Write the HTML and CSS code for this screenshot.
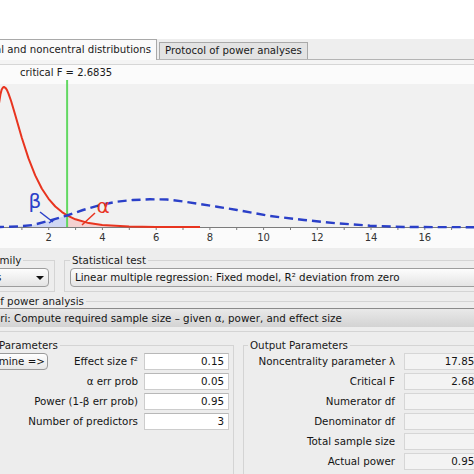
FILE: index.html
```html
<!DOCTYPE html>
<html lang="en">
<head>
<meta charset="utf-8">
<title>G*Power</title>
<link rel="stylesheet" href="styles.css">
</head>
<body>
<div class="window">
  <div class="titlespace"></div>
  <div class="tabs">
    <div class="tab active">Central and noncentral distributions</div>
    <div class="tab">Protocol of power analyses</div>
  </div>
  <div class="tabband"></div>
  <div class="chart">
    <div class="crit">critical F = 2.6835</div>
    <svg class="plot" width="474" height="168" viewBox="0 0 474 168">
      <rect x="0" y="4" width="474" height="143" fill="#f1f1f1"/>
      <polygon fill="#b9c6f5" fill-opacity="0.6" points="-5,147 10,146.8 20,146.3 33,145 50,140.5 67,135.5 67,147"/>
      <polygon fill="#f7bcbc" fill-opacity="0.6" points="67.1,135.3 75.4,139.3 88.8,143.1 102.2,145 129,146.5 155.8,146.9 155.8,147 67.1,147"/>
      <line x1="0" y1="147.5" x2="474" y2="147.5" stroke="#7c7c7c" stroke-width="1"/>
      <g stroke="#7c7c7c" stroke-width="1">
        <line x1="21.9" y1="147" x2="21.9" y2="150"/>
        <line x1="48.7" y1="147" x2="48.7" y2="150"/>
        <line x1="75.6" y1="147" x2="75.6" y2="150"/>
        <line x1="102.4" y1="147" x2="102.4" y2="150"/>
        <line x1="129.3" y1="147" x2="129.3" y2="150"/>
        <line x1="156.2" y1="147" x2="156.2" y2="150"/>
        <line x1="183" y1="147" x2="183" y2="150"/>
        <line x1="209.9" y1="147" x2="209.9" y2="150"/>
        <line x1="236.7" y1="147" x2="236.7" y2="150"/>
        <line x1="263.6" y1="147" x2="263.6" y2="150"/>
        <line x1="290.5" y1="147" x2="290.5" y2="150"/>
        <line x1="317.3" y1="147" x2="317.3" y2="150"/>
        <line x1="344.2" y1="147" x2="344.2" y2="150"/>
        <line x1="371" y1="147" x2="371" y2="150"/>
        <line x1="397.9" y1="147" x2="397.9" y2="150"/>
        <line x1="424.8" y1="147" x2="424.8" y2="150"/>
        <line x1="451.6" y1="147" x2="451.6" y2="150"/>
      </g>
      <g class="ticklabels" text-anchor="middle">
        <text x="48.7" y="161">2</text>
        <text x="102.4" y="161">4</text>
        <text x="156.2" y="161">6</text>
        <text x="209.9" y="161">8</text>
        <text x="263.6" y="161">10</text>
        <text x="317.3" y="161">12</text>
        <text x="371" y="161">14</text>
        <text x="424.8" y="161">16</text>
      </g>
      <line x1="67.1" y1="0" x2="67.1" y2="147" stroke="#62d862" stroke-width="2"/>
      <polyline fill="none" stroke="#e8341f" stroke-width="2" stroke-linejoin="round"
        points="-2.3,38 -1,23.3 0.4,14.5 1.7,9.5 3.1,7.3 3.9,6.9 5.7,8.1 7.1,10.3 8.4,13.3 11.1,21 15.1,34.5 21.8,57.7 28.5,78.4 35.2,95.4 41.9,108.7 48.6,118.8 55.3,126.5 62,132.1 67.1,135.3 75.4,139.3 88.8,143.1 102.2,145 129,146.5 155.8,146.9 200,147"/>
      <polyline fill="none" stroke="#2b40c8" stroke-width="2.4" stroke-dasharray="9 5" stroke-linejoin="round"
        points="-5,147 10,146.8 20,146.3 33,145 50,140.5 67,135.5 83,130 100,125 117,121.7 133,120 150,119.3 167,119.5 183,121.5 200,124 217,126.7 237,130 270,136 304,140 337,143.3 370,145.7 404,147 474,147.2"/>
      <text class="greek beta" x="35" y="128" text-anchor="middle">β</text>
      <line x1="40" y1="132" x2="53" y2="142" stroke="#2b40c8" stroke-width="1.5"/>
      <line x1="49" y1="143" x2="55" y2="139" stroke="#2b40c8" stroke-width="1.5"/>
      <text class="greek alpha" x="103" y="133" text-anchor="middle">α</text>
      <line x1="95" y1="133" x2="82" y2="145" stroke="#e8341f" stroke-width="1.5"/>
    </svg>
  </div>

  <div class="controls">
    <div class="row-top">
      <fieldset class="box fam">
        <legend>Test family</legend>
        <div class="select fam-select">F tests<span class="arrow"></span></div>
      </fieldset>
      <fieldset class="box stat">
        <legend>Statistical test</legend>
        <div class="select stat-select">Linear multiple regression: Fixed model, R² deviation from zero</div>
      </fieldset>
    </div>

    <fieldset class="box type">
      <legend>Type of power analysis</legend>
      <div class="bar">A priori: Compute required sample size – given α, power, and effect size</div>
    </fieldset>

    <div class="row-params">
      <fieldset class="box input">
        <legend>Input Parameters</legend>
        <div class="grid-in">
          <div class="btn">Determine =&gt;</div>
          <div class="lbl r1">Effect size f²</div>
          <div class="field r1">0.15</div>
          <div class="lbl wide r2">α err prob</div>
          <div class="field r2">0.05</div>
          <div class="lbl wide r3">Power (1-β err prob)</div>
          <div class="field r3">0.95</div>
          <div class="lbl wide r4">Number of predictors</div>
          <div class="field r4">3</div>
        </div>
      </fieldset>
      <fieldset class="box output">
        <legend>Output Parameters</legend>
        <div class="grid-out">
          <div class="lbl">Noncentrality parameter λ</div>
          <div class="ofield">17.8500000</div>
          <div class="lbl">Critical F</div>
          <div class="ofield">2.6835182</div>
          <div class="lbl">Numerator df</div>
          <div class="ofield">3</div>
          <div class="lbl">Denominator df</div>
          <div class="ofield">115</div>
          <div class="lbl">Total sample size</div>
          <div class="ofield">119</div>
          <div class="lbl">Actual power</div>
          <div class="ofield">0.9501287</div>
        </div>
      </fieldset>
    </div>
  </div>
</div>
</body>
</html>
```

FILE: styles.css
```css
html, body {
  margin: 0;
  padding: 0;
  overflow: hidden;
  background: #ffffff;
}
body {
  width: 474px;
  height: 474px;
  font-family: "DejaVu Sans", "Liberation Sans", sans-serif;
  font-size: 10px;
  color: #141414;
}
.window {
  width: 474px;
}
.titlespace {
  height: 39px;
  background: #ffffff;
}
.tabs {
  display: flex;
  align-items: flex-end;
  gap: 2px;
  height: 20px;
  background: #eeeeee;
  border-bottom: 1px solid #b4b4b4;
  font-size: 10.2px;
}
.tab {
  flex-shrink: 0;
  box-sizing: border-box;
  padding: 0 5px;
  height: 17px;
  line-height: 16px;
  border: 1px solid #a9a9a9;
  border-bottom: none;
  background: #e3e3e3;
  white-space: nowrap;
  color: #1a1a1a;
}
.tab.active {
  margin-left: -39px;
  height: 21px;
  line-height: 19px;
  background: #fafafa;
  margin-bottom: -1px;
}
.tabband {
  height: 4px;
  background: #f4f4f4;
  border-bottom: 1px solid #d6d6d6;
}
.chart {
  background: #fbfbfb;
}
.crit {
  height: 15px;
  line-height: 15px;
  padding-left: 20px;
  color: #1a1a1a;
}
.plot {
  display: block;
}
.ticklabels text {
  font-family: "DejaVu Sans", sans-serif;
  font-size: 10px;
  fill: #333;
}
.greek {
  font-family: "DejaVu Sans", sans-serif;
  font-size: 20px;
}
.beta { fill: #2b40c8; }
.alpha { fill: #e8341f; }

.controls {
  background: #ededed;
  padding-top: 6px;
  height: 226px;
  font-size: 10.3px;
}
.box {
  margin: 0;
  min-width: 0;
  border: 1px solid #d4d4d4;
  box-sizing: border-box;
}
.box legend {
  padding: 0 2px;
  line-height: 12px;
  height: 12px;
  white-space: nowrap;
  color: #1a1a1a;
}
.row-top {
  display: flex;
  gap: 9px;
}
.fam {
  flex-shrink: 0;
  width: 92px;
  margin-left: -37px;
  padding: 2px 5px 4px 1px;
}
.fam legend {
  margin-left: -1px;
}
.stat {
  flex-shrink: 0;
  width: 540px;
  padding: 2px 5px 4px 5px;
}
.select {
  box-sizing: border-box;
  height: 19px;
  line-height: 17px;
  border: 1px solid #9d9d9d;
  border-radius: 4px;
  background: linear-gradient(#fdfdfd, #e4e4e4);
  white-space: nowrap;
  position: relative;
}
.fam-select {
  padding-left: 1px;
}
.stat-select {
  padding-left: 4px;
}
.arrow {
  position: absolute;
  right: 4px;
  top: 7px;
  width: 0;
  height: 0;
  border-left: 4px solid transparent;
  border-right: 4px solid transparent;
  border-top: 4px solid #111;
}
.type {
  margin-top: 3px;
  margin-left: -36px;
  width: 560px;
  padding: 1px 0 4px 0;
}
.bar {
  height: 19px;
  box-sizing: border-box;
  line-height: 18px;
  padding-left: 5px;
  border-top: 1px solid #8a8a8a;
  background: linear-gradient(#e9e9e9, #d3d3d3);
  white-space: nowrap;
}
.row-params {
  display: flex;
  gap: 9px;
  margin-top: 7px;
}
.input {
  flex-shrink: 0;
  margin-left: -40px;
  width: 274px;
  padding: 2px 4px 8px 6px;
}
.output {
  flex-shrink: 0;
  width: 274px;
  padding: 2px 4px 8px 4px;
}
.grid-in {
  display: grid;
  grid-template-columns: 81px 84px 85px;
  column-gap: 6px;
  row-gap: 3px;
  grid-auto-rows: 17px;
}
.grid-in .btn { grid-column: 1; grid-row: 1; }
.grid-in .lbl { grid-column: 2; }
.grid-in .lbl.wide { grid-column: 1 / 3; }
.grid-in .field { grid-column: 3; }
.grid-in .r1 { grid-row: 1; }
.grid-in .r2 { grid-row: 2; }
.grid-in .r3 { grid-row: 3; }
.grid-in .r4 { grid-row: 4; }
.btn {
  box-sizing: border-box;
  height: 17px;
  line-height: 15px;
  border: 1px solid #9a9a9a;
  border-radius: 4px;
  background: linear-gradient(#ffffff, #e6e6e6);
  text-align: center;
  white-space: nowrap;
}
.lbl {
  line-height: 17px;
  text-align: right;
  white-space: nowrap;
}
.field {
  box-sizing: border-box;
  height: 17px;
  line-height: 15px;
  border: 1px solid #cdcdcd;
  border-top-color: #b8b8b8;
  background: #ffffff;
  text-align: right;
  padding-right: 4px;
}
.grid-out {
  display: grid;
  grid-template-columns: 147px 108px;
  column-gap: 9px;
  row-gap: 3px;
  grid-auto-rows: 17px;
}
.ofield {
  box-sizing: border-box;
  height: 17px;
  line-height: 15px;
  border: 1px solid #d6d6d6;
  background: #f3f3f3;
  text-align: right;
  padding-right: 4px;
}
```
